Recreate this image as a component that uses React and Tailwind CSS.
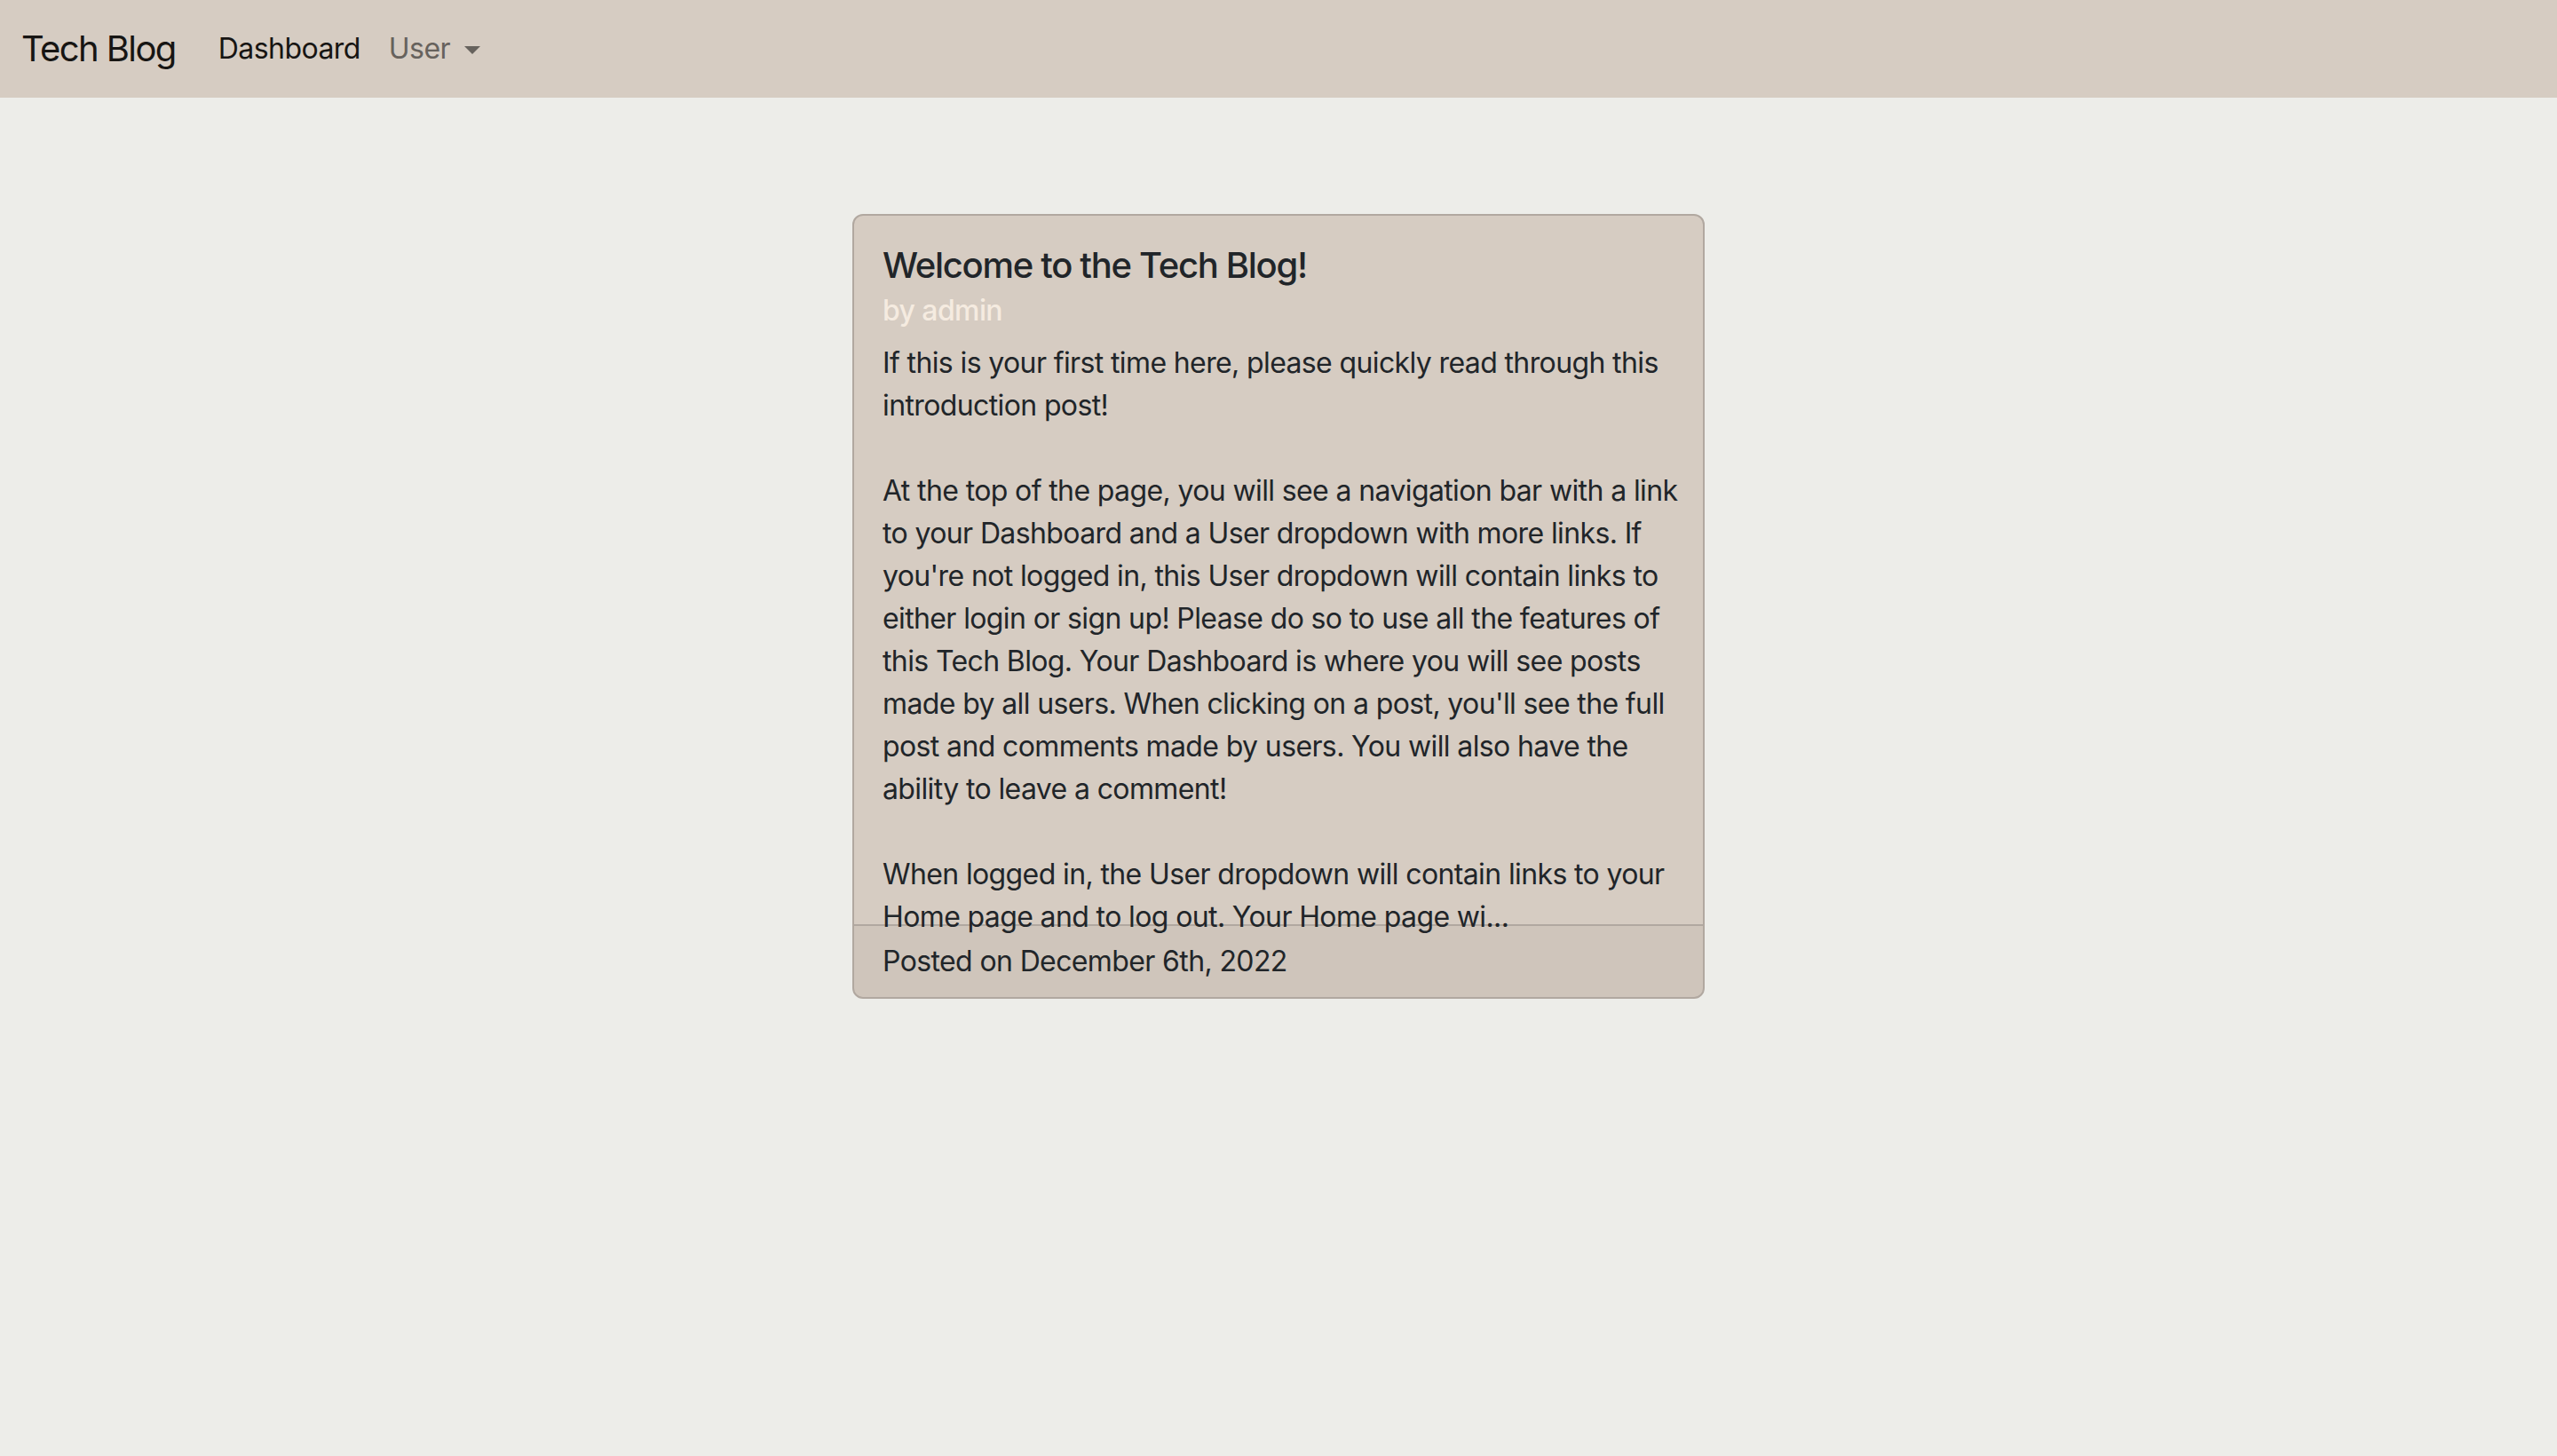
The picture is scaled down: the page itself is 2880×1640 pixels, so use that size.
import React from 'react';

const bodyText = `If this is your first time here, please quickly read through this
introduction post!

At the top of the page, you will see a navigation bar with a link
to your Dashboard and a User dropdown with more links. If
you're not logged in, this User dropdown will contain links to
either login or sign up! Please do so to use all the features of
this Tech Blog. Your Dashboard is where you will see posts
made by all users. When clicking on a post, you'll see the full
post and comments made by users. You will also have the
ability to leave a comment!

When logged in, the User dropdown will contain links to your
Home page and to log out. Your Home page wi...`;

const Navbar = () => (
  <nav className="h-[110px] bg-[#d6ccc2] flex items-center px-6">
    <a className="text-[40px] leading-[60px] text-[#171513] mr-8 tracking-[-1.6px]">Tech Blog</a>
    <a className="px-4 text-[32px] leading-[48px] text-[#171513] tracking-[-0.55px]">Dashboard</a>
    <button className="px-4 text-[32px] leading-[48px] text-[#67625d] flex items-center tracking-[-0.55px]">
      User
      <span className="ml-4 mt-[2px] w-0 h-0 border-x-[9.6px] border-x-transparent border-t-[9.6px] border-t-[#67625d]" />
    </button>
  </nav>
);

const PostCard = () => (
  <div className="w-[960px] mx-auto mt-[131px] bg-[#d6ccc2] border-2 border-[#b1a8a0] rounded-[12px] overflow-hidden">
    <div className="h-[798px] p-8">
      <h5 className="text-[40px] leading-[48px] font-medium text-[#212529] mb-4 tracking-[-1.3px]">
        Welcome to the Tech Blog!
      </h5>
      <h6 className="text-[32px] leading-[38.4px] font-medium text-[#f5ebe0] -mt-2 mb-4 tracking-[-0.6px]">
        by admin
      </h6>
      <p className="text-[32px] leading-[48px] text-[#212529] whitespace-pre tracking-[-0.62px]">{bodyText}</p>
    </div>
    <div className="border-t-2 border-[#b1a8a0] bg-black/[0.03] px-8 py-4 text-[32px] leading-[48px] text-[#212529] tracking-[-0.62px]">
      Posted on December 6th, 2022
    </div>
  </div>
);

export default function App() {
  return (
    <div
      className="min-h-screen bg-[#edede9]"
      style={{ fontFamily: 'Inter, "Liberation Sans", sans-serif' }}
    >
      <Navbar />
      <PostCard />
    </div>
  );
}
